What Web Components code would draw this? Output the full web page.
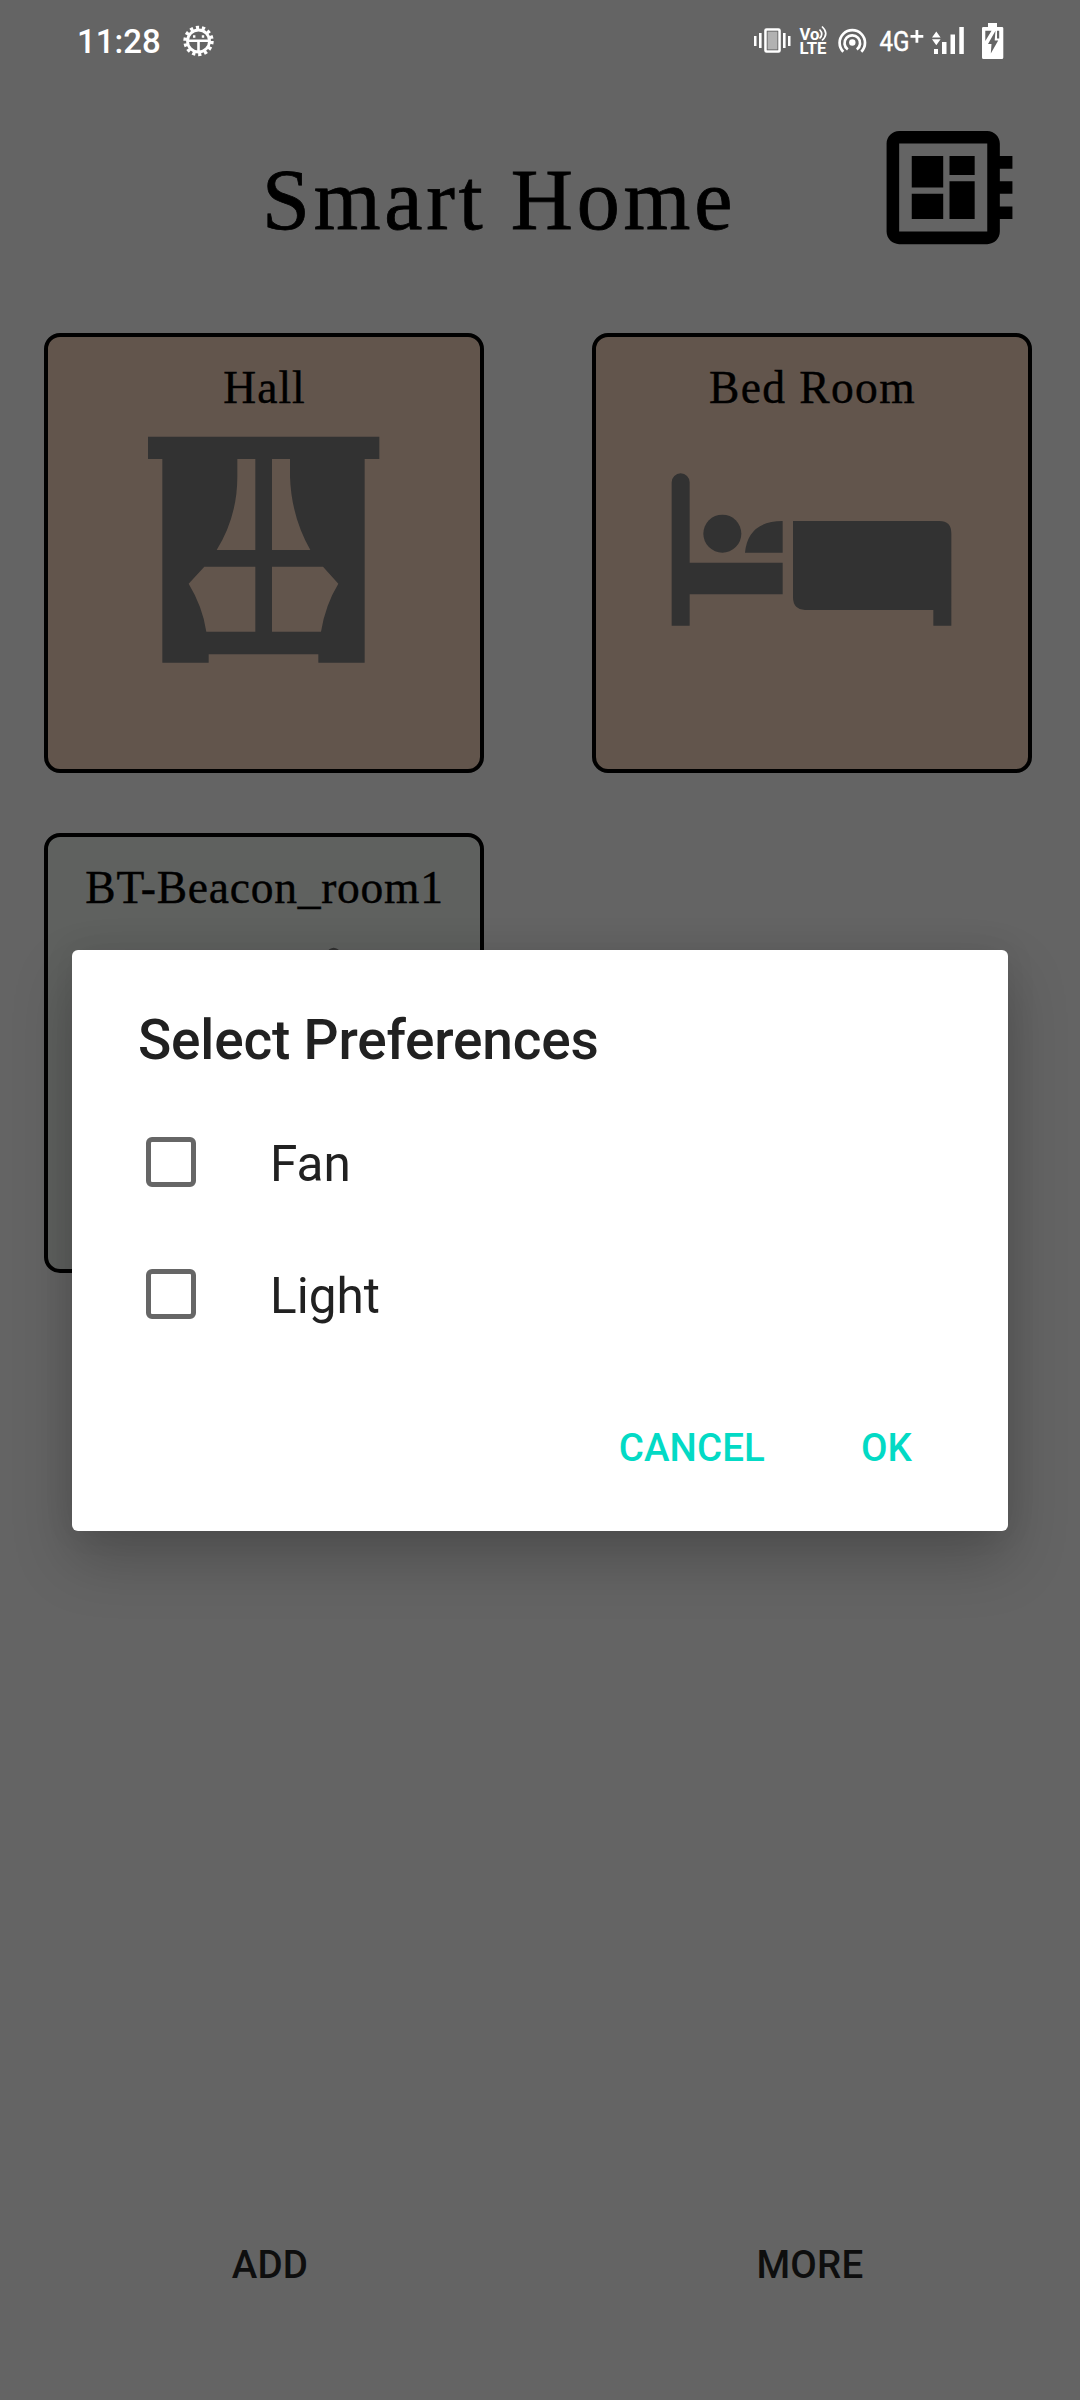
<!DOCTYPE html>
<html lang="en">
<head>
<meta charset="utf-8">
<title>Smart Home</title>
<style>
html,body{margin:0;padding:0;background:#646464}
body{width:1080px;height:2400px;overflow:hidden;font-family:Roboto,sans-serif}
</style>
</head>
<body>
<smart-home-app></smart-home-app>
<script>
function define(name, html) {
  const t = document.createElement('template');
  t.innerHTML = html;
  customElements.define(name, class extends HTMLElement {
    constructor() {
      super();
      this.attachShadow({mode: 'open'}).appendChild(t.content.cloneNode(true));
    }
  });
}

define('status-bar', `
<style>
:host{display:flex;height:84px;box-sizing:border-box;padding:0 0 0 77px;color:#fff;align-items:flex-start}
.time{font:500 33px/40px Roboto,sans-serif;margin-top:22px;width:105px;white-space:nowrap}
svg{display:block;flex:none}
.right{margin-left:auto}
</style>
<span class="time">11:28</span>
<svg width="34" height="84" viewBox="182 0 34 84" fill="none" stroke="#fff">
  <circle cx="198.500" cy="41" r="11" stroke-width="2.800"/>
  <circle cx="198.500" cy="41" r="13.400" stroke-width="3.600" stroke-dasharray="3.200 2.813"/>
  <path d="M187 40.800h23M198.500 41v11" stroke-width="2.600"/>
  <path d="M193 36.500h2.400M201.800 36.500h2.400" stroke-width="2.400"/>
</svg>
<svg class="right" width="340" height="84" viewBox="740 0 340 84" fill="#fff">
  <path d="M754 36h2.500v10H754zM759 33h2.600v15H759zM783 33h2.600v15H783zM788 36h2.500v10H788z"/>
  <rect x="765.500" y="29.500" width="14" height="22" rx="1" fill="#b2b2b2" stroke="#fff" stroke-width="2.600"/>
  <rect x="767.200" y="31.200" width="10.600" height="18.600" fill="none" stroke="#646464" stroke-width=".8"/>
  <text x="799.500" y="39.500" font-family="Roboto,sans-serif" font-weight="700" font-size="16" textLength="20" lengthAdjust="spacingAndGlyphs">Vo</text>
  <g fill="none" stroke="#fff" stroke-width="1.700"><path d="M819.500 29.500q4.500 4.500 0 9"/><path d="M822 26.500q7.500 7 0 14"/></g>
  <text x="799.500" y="54.200" font-family="Roboto,sans-serif" font-weight="700" font-size="17" textLength="27" lengthAdjust="spacingAndGlyphs">LTE</text>
  <circle cx="852.300" cy="42.500" r="3.200"/>
  <g fill="none" stroke="#fff" stroke-width="2.700"><path d="M847.800 49.500A7.800 7.800 0 1 1 856.800 49.500"/><path d="M843.300 51.800A12.700 12.700 0 1 1 861.300 51.800"/></g>
  <text x="879.500" y="51" font-family="Roboto,sans-serif" font-size="28.500" textLength="30" lengthAdjust="spacingAndGlyphs" stroke="#fff" stroke-width=".5">4G</text>
  <path d="M910.500 35h5v-5h2.800v5h5v2.800h-5v5h-2.800v-5h-5z"/>
  <path d="M932 37.500l4.300-6 4.300 6zM932 39.300h8.600l-4.300 6zM934 49h4v5h-4zM942 42h4.500v12H942zM950.500 34.500h4.500V54h-4.500zM959.300 27h4.500v27h-4.500z"/>
  <path d="M988 23h9v4h5q1.300 0 1.300 1.300v29.200q0 1.500-1.500 1.500h-18.300q-1.500 0-1.500-1.500V28.300q0-1.300 1.300-1.300h4.700z"/>
  <path d="M985.300 30.700h6.200l-6.200 10.300zM995.500 30.700L988 44h3.500l-.7 9.500 7.400-13h-3.500zM997 30.700h2.200v7.800H997z" fill="#646464"/>
</svg>
`);

define('app-header', `
<style>
:host{display:flex;height:249px;box-sizing:border-box;padding:28px 55px 0 262px;align-items:flex-start;justify-content:space-between;color:#000}
h1{margin:38px 0 0;font:400 86px/100px "Liberation Serif",serif;letter-spacing:3.800px;word-spacing:-1px;white-space:nowrap;-webkit-text-stroke:.8px #000}
svg{display:block;fill:#000}
</style>
<h1><slot></slot></h1>
<svg width="151" height="151" viewBox="0 0 24 24"><path d="M22 9V7h-2V5c0-1.100-.9-2-2-2H4c-1.100 0-2 .9-2 2v14c0 1.100.9 2 2 2h14c1.100 0 2-.9 2-2v-2h2v-2h-2v-2h2v-2h-2V9h2zm-4 10H4V5h14v14zM6 13h5v4H6zm6-6h4v3h-4zM6 7h5v5H6zm6 4h4v6h-4z"/></svg>
`);

define('room-card', `
<style>
:host{display:flex;flex-direction:column;box-sizing:border-box;width:440px;height:440px;border:4px solid #000;border-radius:16px;background:var(--fill,#62554c);color:#000;overflow:hidden}
.name{font:400 45.500px/52px "Liberation Serif",serif;text-align:center;margin-top:25px;height:51px;letter-spacing:var(--track,1px);white-space:nowrap;text-indent:1px;-webkit-text-stroke:.4px #000}
::slotted(svg){display:block;fill:#323232}
</style>
<div class="name"><slot name="title"></slot></div>
<slot></slot>
`);

define('room-grid', `
<style>
:host{display:grid;grid-template-columns:440px 440px;gap:60px 108px;padding:0 44px}
</style>
<slot></slot>
`);

define('bottom-actions', `
<style>
:host{display:flex;margin-top:auto;height:271px;color:#0e0e0e}
::slotted(span){flex:1;text-align:center;font:500 38.500px/44px Roboto,sans-serif;margin-top:114px;letter-spacing:.2px}
</style>
<slot></slot>
`);

define('check-row', `
<style>
:host{display:flex;height:132px;align-items:center;padding-left:74px;gap:74.500px;color:#212121;font:400 49.500px/58px Roboto,sans-serif}
i{display:block;box-sizing:border-box;width:49.500px;height:49.500px;border:5.500px solid #666;border-radius:6px;flex:none}
span{padding-top:3px}
</style>
<i></i><span><slot></slot></span>
`);

define('pref-dialog', `
<style>
:host{display:flex;position:absolute;inset:0;flex-direction:column;align-items:center}
section{display:flex;flex-direction:column;margin-top:950px;width:936px;height:581px;background:#fff;border-radius:6px;box-shadow:0 28px 60px rgba(0,0,0,.22),0 0 32px rgba(0,0,0,.07)}
h2{margin:58px 0 0 66px;height:88px;font:500 55px/64px Roboto,sans-serif;letter-spacing:-.2px;color:#212121;white-space:nowrap}
.actions{display:flex;justify-content:flex-end;gap:96px;padding:66px 96px 0 0;font:500 38.500px/44px Roboto,sans-serif;letter-spacing:.1px;color:#03dac5}
</style>
<section>
  <h2><slot name="title"></slot></h2>
  <slot></slot>
  <div class="actions"><slot name="actions"></slot></div>
</section>
`);

define('smart-home-app', `
<style>
:host{display:flex;flex-direction:column;position:relative;width:1080px;height:2400px;background:#646464;overflow:hidden}
.beacon{--fill:#5f615f;--track:.75px}
.bed{--track:1.400px}
</style>
<status-bar></status-bar>
<app-header>Smart Home</app-header>
<room-grid>
  <room-card><span slot="title">Hall</span>
    <svg width="432" height="260" viewBox="54 279 1296 780">
      <path fill-rule="evenodd" d="M354 350H1048V417H1004V1028H865V1003H536V1028H397V417H354ZM622 417H676V690H560Q622 590 622 470ZM726 417H780V470Q784 590 841 690H726ZM523 740H676V935H529Q518 860 476 791ZM726 740H879L925 791Q886 855 873 935H726Z"/>
    </svg>
  </room-card>
  <room-card class="bed"><span slot="title">Bed Room</span>
    <svg width="432" height="260" viewBox="48 279 1296 780">
      <path d="M275 917V487a27 27 0 0 1 54 0V728H608V823H329V917ZM495 698Q504 603 608 603V698ZM639 603H1078Q1114 603 1114 640V917H1060V870H675Q639 868 639 832Z"/>
      <circle cx="427" cy="641" r="57"/>
    </svg>
  </room-card>
  <room-card class="beacon"><span slot="title">BT-Beacon_room1</span>
    <svg width="432" height="260" viewBox="54 279 1296 780">
      <path d="M898 388Q911 378 924 388L1000 470H820Z"/>
    </svg>
  </room-card>
</room-grid>
<bottom-actions><span>ADD</span><span>MORE</span></bottom-actions>
<pref-dialog>
  <span slot="title">Select Preferences</span>
  <check-row>Fan</check-row>
  <check-row>Light</check-row>
  <span slot="actions">CANCEL</span><span slot="actions">OK</span>
</pref-dialog>
`);
</script>
</body>
</html>
